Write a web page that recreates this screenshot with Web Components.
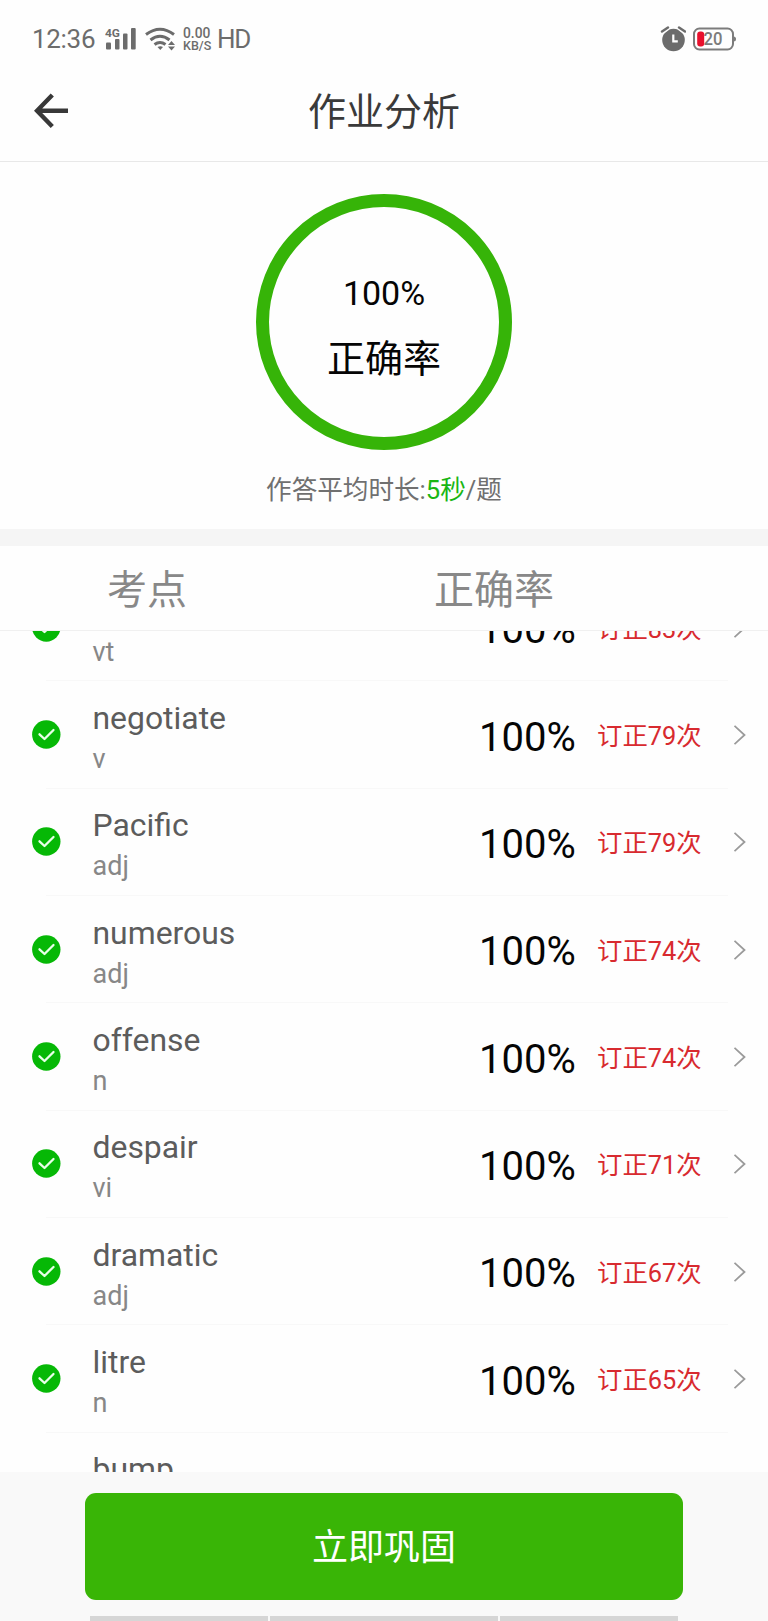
<!DOCTYPE html>
<html lang="zh-CN">
<head>
<meta charset="utf-8">
<title>作业分析</title>
<style>
    body{width:768px;height:1621px;margin:0;overflow:hidden;background:#fefefe;
        font-family:Roboto,"Noto Sans CJK SC",sans-serif;}
</style>
</head>
<body>
<analysis-page>
    <status-bar slot="top" time="12:36" battery="20"></status-bar>
    <title-bar slot="top">作业分析</title-bar>
    <score-ring slot="score" value="100%" seconds="5秒">正确率</score-ring>
    <span slot="col1">考点</span>
    <span slot="col2">正确率</span>
    <word-row type="vt" rate="100%" fix="订正83次"></word-row>
    <word-row type="v" rate="100%" fix="订正79次">negotiate</word-row>
    <word-row type="adj" rate="100%" fix="订正79次">Pacific</word-row>
    <word-row type="adj" rate="100%" fix="订正74次">numerous</word-row>
    <word-row type="n" rate="100%" fix="订正74次">offense</word-row>
    <word-row type="vi" rate="100%" fix="订正71次">despair</word-row>
    <word-row type="adj" rate="100%" fix="订正67次">dramatic</word-row>
    <word-row type="n" rate="100%" fix="订正65次">litre</word-row>
    <word-row cut>bump</word-row>
    <action-bar slot="bottom">立即巩固</action-bar>
</analysis-page>

<script>
function define(name, html){
    const template = document.createElement('template');
    template.innerHTML = html;
    customElements.define(name, class extends HTMLElement {
        constructor(){
            super();
            this.attachShadow({ mode: 'open'});
            this.shadowRoot.appendChild(template.content.cloneNode(true));
            // every [data-attr] node shows the attribute of that name
            this.shadowRoot.querySelectorAll('[data-attr]').forEach(tag => {
                tag.textContent = this.getAttribute(tag.dataset.attr) || '';
            });
        }
    });
}

define('status-bar', `
    <style>
        :host,*{margin:0;padding:0;box-sizing:border-box;}
        :host{display:flex;align-items:center;height:78px;padding:0 32px 0 32px;color:#6c6c6c;}
        .time{font-size:26px;line-height:30px;width:73px;letter-spacing:-.3px;}
        .signal{margin-right:8px;}
        .speed{display:flex;flex-direction:column;width:34px;font-weight:500;}
        .speed span{font-size:12.500px;line-height:12px;}
        .speed .num{font-size:13.800px;line-height:13px;}
        .hd{font-size:26px;line-height:30px;letter-spacing:-1.4px;flex:1;}
        svg{display:block;flex:none;}
        .alarm{margin-right:7px;}
    </style>
    <span class="time" data-attr="time"></span>
    <svg class="signal" width="32" height="24" viewBox="0 0 32 24" fill="#6c6c6c">
        <text x="0" y="9.5" font-size="11.5" font-weight="700" font-family="Roboto" textLength="15" lengthAdjust="spacingAndGlyphs">4G</text>
        <rect x="1" y="15.500" width="5" height="7" rx="1"/>
        <rect x="10" y="12" width="4.500" height="10.500" rx="1"/>
        <rect x="18" y="6.500" width="4.500" height="16" rx="1"/>
        <rect x="26" y="1" width="4.700" height="21.500" rx="1"/>
    </svg>
    <svg width="38" height="24" viewBox="0 0 38 24" fill="none" stroke="#6c6c6c" stroke-width="3">
        <path d="M1 7.500Q15 -3 29 7.500"/>
        <path d="M5.500 13Q15 5.500 24.500 13"/>
        <path d="M9.500 17.500Q15 13.500 20.500 17.500"/>
        <path d="M12.500 20q3 -1.500 5.500 0l-2.700 3z" fill="#6c6c6c" stroke="none"/>
        <path d="M23 18l3.500 -4 3.500 4zM23 19.500h7l-3.500 4z" fill="#6c6c6c" stroke="none"/>
    </svg>
    <span class="speed"><span class="num">0.00</span><span>KB/S</span></span>
    <span class="hd">HD</span>
    <svg class="alarm" width="26" height="26" viewBox="0 0 26 26">
        <circle cx="13.500" cy="14" r="11.300" fill="#6c6c6c"/>
        <path d="M2 6L8 1.400M25 6L19 1.400" stroke="#fefefe" stroke-width="5"/>
        <path d="M2 5.500L8 1.400M25 5.500L19 1.400" stroke="#6c6c6c" stroke-width="2.400" stroke-linecap="round"/>
        <path d="M13.300 8.500v6.800h4.500" fill="none" stroke="#fff" stroke-width="2.200"/>
    </svg>
    <svg width="43" height="24" viewBox="0 0 43 24">
        <rect x="1" y="1.500" width="39" height="21" rx="5.500" fill="none" stroke="#7c7c7c" stroke-width="2"/>
        <path d="M40.500 9.500q2.500 0 2.500 2.500t-2.500 2.500z" fill="#7c7c7c"/>
        <rect x="4.200" y="4.500" width="7" height="15" rx="3" fill="#e8112d"/>
        <text x="10.500" y="18" font-size="17.500" font-weight="500" font-family="Roboto" fill="#7c7c7c" textLength="19" lengthAdjust="spacingAndGlyphs" data-attr="battery"></text>
    </svg>
`);

define('title-bar', `
    <style>
        :host,*{margin:0;padding:0;box-sizing:border-box;}
        :host{display:flex;align-items:center;height:84px;padding:0 34px;border-bottom:1px solid #e8e8e8;}
        svg{display:block;width:36px;height:36px;margin-bottom:17px;}
        h1{flex:1;margin:0 36px 16px 0;text-align:center;font-size:38px;line-height:50px;font-weight:400;color:#3a3a3a;}
    </style>
    <svg viewBox="0 0 36 36" fill="none" stroke="#383838" stroke-width="4.400">
        <path d="M34 17.800H4M18.300 2L3 17.800L18.300 33.500"/>
    </svg>
    <h1><slot></slot></h1>
`);

define('score-ring', `
    <style>
        :host,*{margin:0;padding:0;box-sizing:border-box;}
        :host{display:flex;flex-direction:column;align-items:center;height:367px;padding-top:32px;}
        .ring{display:flex;flex-direction:column;align-items:center;width:256px;height:256px;
            padding-top:66px;border:13px solid #36b408;border-radius:50%;color:#050505;}
        .value{font-size:34px;line-height:40px;}
        .label{font-size:38px;line-height:50px;margin-top:21px;}
        .average{margin-top:22px;font-size:25.600px;line-height:36px;color:#707070;}
        b{font-weight:400;color:#19b614;}
    </style>
    <div class="ring">
        <span class="value" data-attr="value"></span>
        <span class="label"><slot></slot></span>
    </div>
    <p class="average">作答平均时长:<b data-attr="seconds"></b>/题</p>
`);

define('word-row', `
    <style>
        :host,*{margin:0;padding:0;box-sizing:border-box;}
        :host{display:flex;align-items:center;flex:none;height:107.33px;padding:0 22px 0 32px;}
        .check{width:29px;height:29px;margin:0 31.500px 1px 0;}
        .text{display:flex;flex-direction:column;flex:1;margin-top:4px;}
        .word{font-size:31.900px;line-height:42px;height:43px;color:#5c5c5c;}
        .type{font-size:27px;line-height:38px;height:37px;color:#878787;}
        .rate{font-size:40px;line-height:48px;width:118px;margin-top:5px;color:#050505;}
        .fix{font-size:25.400px;line-height:36px;width:137px;margin-top:2px;color:#d82a2f;}
        .arrow{width:12px;height:20px;}
        svg{display:block;flex:none;}
        :host([cut]) svg{visibility:hidden;}
    </style>
    <svg class="check" viewBox="0 0 29 29">
        <circle cx="14.300" cy="14.500" r="14.200" fill="#06b806"/>
        <path d="M7.500 14.300L12.500 19L21.500 10" fill="none" stroke="#e8ffe8" stroke-width="2.300" stroke-linecap="round" stroke-linejoin="round"/>
    </svg>
    <div class="text">
        <span class="word"><slot></slot></span>
        <span class="type" data-attr="type"></span>
    </div>
    <span class="rate" data-attr="rate"></span>
    <span class="fix" data-attr="fix"></span>
    <svg class="arrow" viewBox="0 0 12 20" fill="none" stroke="#9a9a9a" stroke-width="1.800">
        <path d="M.500 .800L10.500 10L.500 19.200"/>
    </svg>
`);

define('action-bar', `
    <style>
        :host,*{margin:0;padding:0;box-sizing:border-box;}
        :host{display:flex;flex-direction:column;height:149px;padding:21px 85px 0;background:#f9f9f9;}
        button{height:107px;padding-top:3px;border:0;border-radius:11px;background:#39b506;color:#fff;
            font-family:inherit;font-size:36px;line-height:50px;}
        .tabs{display:flex;gap:2px;margin:16px 5px 0;}
        .tabs i{flex:1 1 178px;height:5px;background:#d6d6d6;}
        .tabs i:nth-child(2){flex-basis:228px;}
    </style>
    <button><slot></slot></button>
    <div class="tabs"><i></i><i></i><i></i></div>
`);

define('analysis-page', `
    <style>
        :host,*{margin:0;padding:0;box-sizing:border-box;}
        :host{display:flex;flex-direction:column;height:1621px;}
        .gap{height:17px;background:#f5f5f5;}
        .head{display:flex;height:85px;padding:19px 0 0 107px;border-bottom:1px solid #f0f0f0;
            font-size:40px;line-height:52px;color:#888;}
        .head div:first-child{width:327px;}
        /* the list is scrolled part of the way into its first row */
        .list{flex:1;min-height:0;overflow:hidden;display:flex;flex-direction:column;justify-content:flex-end;}
        .rows{display:flex;flex-direction:column;margin-bottom:-68px;}
        ::slotted(word-row){background:linear-gradient(#f8f8f8,#f8f8f8) 46px 100%/682px 1px no-repeat;}
    </style>
    <slot name="top"></slot>
    <slot name="score"></slot>
    <div class="gap"></div>
    <div class="head"><div><slot name="col1"></slot></div><div><slot name="col2"></slot></div></div>
    <div class="list"><div class="rows"><slot></slot></div></div>
    <slot name="bottom"></slot>
`);
</script>
</body>
</html>
